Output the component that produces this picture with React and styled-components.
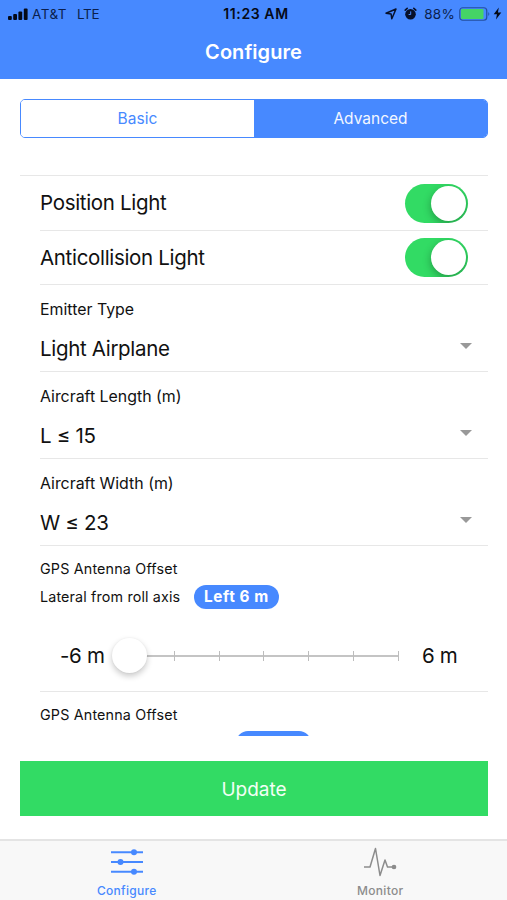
import React from 'react';
import styled, { createGlobalStyle } from 'styled-components';

const BLUE = '#4789ff';
const GREEN = '#32db64';

const GlobalStyle = createGlobalStyle`
  * { box-sizing: border-box; }
  body { margin: 0; background: #fff; font-family: Inter, "Liberation Sans", sans-serif; color: #111; }
`;

const Screen = styled.div`
  width: 507px;
  height: 900px;
  display: flex;
  flex-direction: column;
  background: #fff;
  overflow: hidden;
  white-space: nowrap;
`;

const Header = styled.header`
  height: 79px;
  flex: none;
  background: ${BLUE};
`;

const StatusBar = styled.div`
  height: 27px;
  display: grid;
  grid-template-columns: 1fr auto 1fr;
  align-items: center;
  padding: 0 5px 0 8px;
  color: #0b1f4d;
`;

const StatusGroup = styled.div`
  display: flex;
  align-items: center;
  justify-content: ${(p) => (p.$end ? 'flex-end' : 'flex-start')};
`;

const StatusText = styled.span`
  margin-left: ${(p) => p.$gap || 0}px;
  font-size: ${(p) => p.$size || 13.5}px;
  letter-spacing: ${(p) => p.$track || 0}px;
`;

const Clock = styled.span`
  padding-left: 2px;
  font-weight: 600;
  font-size: 14px;
  letter-spacing: 0.6px;
  color: #050a18;
`;

const StatusIcon = styled.svg`
  display: block;
  margin-left: ${(p) => p.$gap || 0}px;
`;

const Title = styled.h1`
  margin: 0;
  height: 50px;
  line-height: 50px;
  text-align: center;
  font-size: 20px;
  font-weight: 600;
  letter-spacing: 0.05px;
  color: #fff;
`;

const Segments = styled.div`
  flex: none;
  display: flex;
  height: 39px;
  margin: 20px 19px 0 20px;
  border: 1.5px solid ${BLUE};
  border-radius: 5px;
  overflow: hidden;
`;

const Segment = styled.button`
  flex: 1;
  border: 0;
  padding: 0 0 1px;
  font: 400 15.5px Inter, sans-serif;
  letter-spacing: ${(p) => p.$track}px;
  background: ${(p) => (p.$active ? BLUE : '#fff')};
  color: ${(p) => (p.$active ? '#f3f7ff' : BLUE)};
`;

const List = styled.main`
  flex: none;
  height: 561px;
  margin: 37px 19px 0 20px;
  border-top: 1px solid #e7e7e7;
  overflow: hidden;
`;

const Row = styled.section`
  height: ${(p) => p.$height}px;
  margin-left: 20px;
  border-bottom: 1px solid #e7e7e7;
`;

const ToggleRow = styled(Row)`
  display: flex;
  align-items: center;
  justify-content: space-between;
  padding-right: 20px;
`;

const Label = styled.span`
  font-size: 20.5px;
  line-height: 26px;
  letter-spacing: -0.32px;
`;

const Toggle = styled.div`
  width: 63px;
  height: 39px;
  padding: 2px;
  border-radius: 20px;
  background: ${GREEN};
  display: flex;
  justify-content: flex-end;
  overflow: hidden;
`;

const ToggleKnob = styled.div`
  width: 35px;
  height: 35px;
  border-radius: 50%;
  background: #fff;
  box-shadow: 0 3px 8px rgba(0, 0, 0, 0.3);
`;

const Caption = styled.div`
  padding-top: 14px;
  font-size: 15.9px;
  line-height: 21px;
`;

const SelectLine = styled.div`
  display: flex;
  align-items: center;
  justify-content: space-between;
  height: 26px;
  margin-top: 16px;
  padding-right: 16px;
`;

const Caret = styled.span`
  width: 0;
  height: 0;
  margin-top: -6px;
  border: 6px solid transparent;
  border-top-color: #999;
  border-bottom: 0;
`;

const SmallCaption = styled.div`
  padding-top: 13px;
  font-size: 14.3px;
  line-height: 20px;
  letter-spacing: 0.18px;
`;

const OffsetLine = styled.div`
  display: grid;
  grid-template-columns: ${(p) => p.$indent}px auto;
  justify-content: start;
  align-items: center;
  height: 24px;
  margin-top: 6px;
  font-size: 14.3px;
  line-height: 22px;
  letter-spacing: 0.15px;
`;

const OffsetName = styled.span`
  padding-bottom: 1px;
`;

const Pill = styled.span`
  grid-column: 2;
  width: ${(p) => p.$width}px;
  height: 24px;
  border-radius: 12px;
  background: ${BLUE};
  color: #fff;
  font-weight: 700;
  font-size: 15.3px;
  letter-spacing: 0.6px;
  line-height: 24px;
  text-align: center;
`;

const RangeRow = styled.div`
  display: grid;
  grid-template-columns: 69px 270px auto;
  align-items: center;
  height: 36px;
  margin: 29px 0 0 20px;
`;

const Track = styled.div`
  height: 10px;
  display: grid;
  grid-template-columns: repeat(6, 1fr);
  position: relative;
  border-right: 1.5px solid #bdbdbd;
  background: linear-gradient(#c4c4c4, #c4c4c4) 0 4px / 100% 2px no-repeat;
`;

const Tick = styled.span`
  border-left: 1.5px solid #bdbdbd;
`;

const RangeKnob = styled.span`
  position: absolute;
  left: -17px;
  top: -13px;
  width: 35px;
  height: 35px;
  border-radius: 50%;
  background: #fff;
  box-shadow: 0 3px 6px rgba(0, 0, 0, 0.22), 0 0 2px rgba(0, 0, 0, 0.05);
`;

const MaxLabel = styled(Label)`
  padding-left: 23px;
`;

const UpdateButton = styled.button`
  flex: none;
  height: 55px;
  margin: 25px 19px 0 20px;
  padding: 2px 0 0;
  border: 0;
  background: ${GREEN};
  color: #f2fff5;
  font: 400 19px Inter, sans-serif;
  letter-spacing: 0;
`;

const TabBar = styled.nav`
  flex: none;
  display: grid;
  grid-template-columns: 1fr 1fr;
  height: 61px;
  margin-top: 23px;
  border-top: 2px solid #e4e4e4;
  background: #f8f8f8;
`;

const Tab = styled.div`
  display: flex;
  flex-direction: column;
  align-items: center;
  color: ${(p) => (p.$active ? BLUE : '#8c8c8c')};
  font-size: 12px;
  line-height: 16px;
  font-weight: 500;
  letter-spacing: 0.3px;
`;

const TabIcon = styled.svg`
  width: 36px;
  height: 32px;
  margin: 6px 0 4px;
`;

const selects = [
  { caption: 'Emitter Type', value: 'Light Airplane' },
  { caption: 'Aircraft Length (m)', value: 'L ≤ 15' },
  { caption: 'Aircraft Width (m)', value: 'W ≤ 23' },
];

export default function App() {
  return (
    <Screen>
      <GlobalStyle />
      <Header>
        <StatusBar>
          <StatusGroup>
            <StatusIcon width="20" height="12" viewBox="0 0 20 12" fill="#050a18">
              <rect x="0" y="8" width="3.8" height="4" rx="1" />
              <rect x="5.2" y="6" width="3.8" height="6" rx="1" />
              <rect x="10.4" y="3.5" width="3.8" height="8.5" rx="1" />
              <rect x="15.8" y="0.5" width="3.8" height="11.5" rx="1" />
            </StatusIcon>
            <StatusText $gap={4} $track={0.5}>AT&amp;T</StatusText>
            <StatusText $gap={10} $track={-0.3}>LTE</StatusText>
          </StatusGroup>
          <Clock>11:23 AM</Clock>
          <StatusGroup $end>
            <StatusIcon width="12" height="12" viewBox="0 0 12 12" fill="none" stroke="#07102a" strokeWidth="1.5" strokeLinejoin="round">
              <path d="M11 1 L6.8 10.8 L6.1 6 L1 5.2 Z" />
            </StatusIcon>
            <StatusIcon $gap={7} width="13" height="13" viewBox="0 0 13 13">
              <circle cx="6.5" cy="7.2" r="5.3" fill="#07102a" />
              <path d="M1.2 3.2 L3.2 1.4 M11.8 3.2 L9.8 1.4" stroke="#07102a" strokeWidth="1.6" strokeLinecap="round" />
              <path d="M6.7 4.4 V7.5 H4.6" fill="none" stroke={BLUE} strokeWidth="1" />
            </StatusIcon>
            <StatusText $gap={7} $track={0.3}>88%</StatusText>
            <StatusIcon $gap={4} width="32" height="14" viewBox="0 0 32 14">
              <rect x="0.75" y="0.75" width="27" height="12.5" rx="3" fill="none" stroke="#244f9e" strokeWidth="1.2" />
              <rect x="2" y="2" width="22.5" height="10" rx="1" fill="#45d466" />
              <path d="M29.3 5 Q31.3 7 29.3 9 Z" fill="#244f9e" />
            </StatusIcon>
            <StatusIcon $gap={2} width="9" height="13" viewBox="0 0 8 12" fill="#050a18">
              <path d="M5.2 0.5 L0.5 6.8 H3.5 L2.6 11.5 L7.5 5.1 H4.4 Z" />
            </StatusIcon>
          </StatusGroup>
        </StatusBar>
        <Title>Configure</Title>
      </Header>

      <Segments>
        <Segment $track={0.1}>Basic</Segment>
        <Segment $active $track={0}>Advanced</Segment>
      </Segments>

      <List>
        <ToggleRow $height={55}>
          <Label>Position Light</Label>
          <Toggle><ToggleKnob /></Toggle>
        </ToggleRow>
        <ToggleRow $height={54}>
          <Label>Anticollision Light</Label>
          <Toggle><ToggleKnob /></Toggle>
        </ToggleRow>
        {selects.map((s) => (
          <Row key={s.caption} $height={87}>
            <Caption>{s.caption}</Caption>
            <SelectLine>
              <Label>{s.value}</Label>
              <Caret />
            </SelectLine>
          </Row>
        ))}
        <Row $height={146}>
          <SmallCaption>GPS Antenna Offset</SmallCaption>
          <OffsetLine $indent={154}>
            <OffsetName>Lateral from roll axis</OffsetName>
            <Pill $width={85}>Left 6 m</Pill>
          </OffsetLine>
          <RangeRow>
            <Label>-6 m</Label>
            <Track>
              {[0, 1, 2, 3, 4, 5].map((n) => <Tick key={n} />)}
              <RangeKnob />
            </Track>
            <MaxLabel>6 m</MaxLabel>
          </RangeRow>
        </Row>
        <Row $height={146}>
          <SmallCaption>GPS Antenna Offset</SmallCaption>
          <OffsetLine $indent={196}>
            <Pill $width={75} />
          </OffsetLine>
        </Row>
      </List>

      <UpdateButton>Update</UpdateButton>

      <TabBar>
        <Tab $active>
          <TabIcon viewBox="0 0 36 32" fill={BLUE} stroke={BLUE} strokeWidth="2">
            <path d="M2 5.3H34M2 15H34M2 24.7H34" />
            <circle cx="25" cy="5.3" r="2" />
            <circle cx="11.5" cy="15" r="2" />
            <circle cx="25" cy="24.7" r="2" />
          </TabIcon>
          Configure
        </Tab>
        <Tab>
          <TabIcon viewBox="0 0 36 32" fill="none" stroke="#8c8c8c" strokeWidth="1.5" strokeLinejoin="round">
            <path d="M2 20H8L13.5 1.5L18 28.5L23 13L25.5 20H32" />
            <circle cx="32" cy="20" r="1.6" fill="#8c8c8c" />
          </TabIcon>
          Monitor
        </Tab>
      </TabBar>
    </Screen>
  );
}
